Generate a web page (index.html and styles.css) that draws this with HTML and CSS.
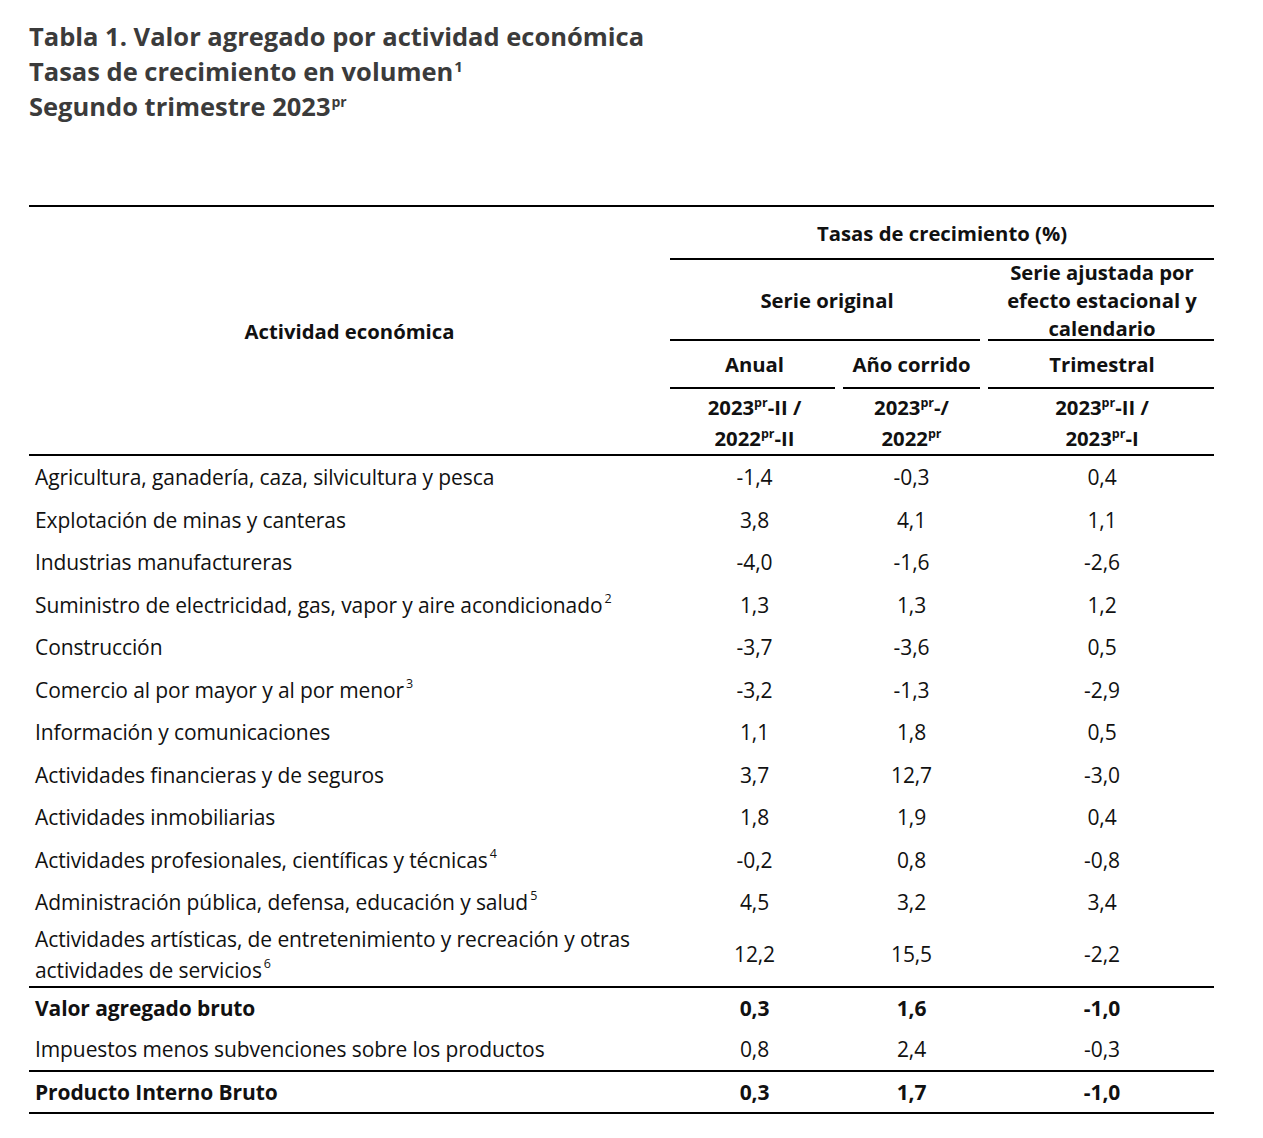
FILE: index.html
```html
<!DOCTYPE html>
<html lang="es">
<head>
<meta charset="utf-8">
<title>Tabla 1. Valor agregado por actividad económica</title>
<link rel="stylesheet" href="styles.css">
</head>
<body>
<div class="page">
  <h1 class="title">
    <span class="tline">Tabla 1. Valor agregado por actividad económica</span>
    <span class="tline">Tasas de crecimiento en volumen<sup class="tsup">1</sup></span>
    <span class="tline">Segundo trimestre 2023<sup class="tsup pr">pr</sup></span>
  </h1>

  <table class="tbl">
    <colgroup>
      <col class="c-act">
      <col class="c-anual">
      <col class="c-anio">
      <col class="c-trim">
    </colgroup>
    <thead>
      <tr class="h1">
        <th rowspan="4" class="h-act">Actividad económica</th>
        <th colspan="3" class="line-full">Tasas de crecimiento (%)</th>
      </tr>
      <tr class="h2">
        <th colspan="2" class="line-r">Serie original</th>
        <th class="line-l last"><span class="tight">Serie ajustada por<br>efecto estacional y<br>calendario</span></th>
      </tr>
      <tr class="h3">
        <th class="line-r">Anual</th>
        <th class="line-lr">Año corrido</th>
        <th class="line-l last">Trimestral</th>
      </tr>
      <tr class="h4">
        <th>2023<sup>pr</sup>-II /<br>2022<sup>pr</sup>-II</th>
        <th>2023<sup>pr</sup>-/<br>2022<sup>pr</sup></th>
        <th class="last">2023<sup>pr</sup>-II /<br>2023<sup>pr</sup>-I</th>
      </tr>
    </thead>
    <tbody>
      <tr><td>Agricultura, ganadería, caza, silvicultura y pesca</td><td>-1,4</td><td>-0,3</td><td>0,4</td></tr>
      <tr><td>Explotación de minas y canteras</td><td>3,8</td><td>4,1</td><td>1,1</td></tr>
      <tr><td>Industrias manufactureras</td><td>-4,0</td><td>-1,6</td><td>-2,6</td></tr>
      <tr><td>Suministro de electricidad, gas, vapor y aire acondicionado<sup class="fn">2</sup></td><td>1,3</td><td>1,3</td><td>1,2</td></tr>
      <tr><td>Construcción</td><td>-3,7</td><td>-3,6</td><td>0,5</td></tr>
      <tr><td>Comercio al por mayor y al por menor<sup class="fn">3</sup></td><td>-3,2</td><td>-1,3</td><td>-2,9</td></tr>
      <tr><td>Información y comunicaciones</td><td>1,1</td><td>1,8</td><td>0,5</td></tr>
      <tr><td>Actividades financieras y de seguros</td><td>3,7</td><td>12,7</td><td>-3,0</td></tr>
      <tr><td>Actividades inmobiliarias</td><td>1,8</td><td>1,9</td><td>0,4</td></tr>
      <tr><td>Actividades profesionales, científicas y técnicas<sup class="fn">4</sup></td><td>-0,2</td><td>0,8</td><td>-0,8</td></tr>
      <tr><td>Administración pública, defensa, educación y salud<sup class="fn">5</sup></td><td>4,5</td><td>3,2</td><td>3,4</td></tr>
      <tr class="two"><td>Actividades artísticas, de entretenimiento y recreación y otras<br>actividades de servicios<sup class="fn">6</sup></td><td>12,2</td><td>15,5</td><td>-2,2</td></tr>
      <tr class="total"><td>Valor agregado bruto</td><td>0,3</td><td>1,6</td><td>-1,0</td></tr>
      <tr><td>Impuestos menos subvenciones sobre los productos</td><td>0,8</td><td>2,4</td><td>-0,3</td></tr>
      <tr class="total"><td>Producto Interno Bruto</td><td>0,3</td><td>1,7</td><td>-1,0</td></tr>
    </tbody>
  </table>
</div>
</body>
</html>
```

FILE: styles.css
```css
html, body {
  margin: 0;
  padding: 0;
  background: #ffffff;
}

.page {
  padding: 19px 0 0 29px;
  font-family: "Open Sans", "Noto Sans", "Liberation Sans", sans-serif;
  color: #111111;
}

.title {
  margin: 0 0 81px 0;
  font-size: 25.5px;
  font-weight: 700;
  line-height: 35px;
  color: #3b3b3b;
}

.tline {
  display: block;
}

.tsup {
  font-size: 15px;
  line-height: 0;
  vertical-align: 9px;
  margin-left: 1px;
}

.tsup.pr {
  font-size: 14px;
}

.tbl {
  width: 1185px;
  table-layout: fixed;
  border-collapse: separate;
  border-spacing: 0;
  border-top: 2px solid #000;
  border-bottom: 2px solid #000;
  font-size: 21px;
  letter-spacing: -0.1px;
}

.c-act { width: 641px; }
.c-anual { width: 169px; }
.c-anio { width: 145px; }
.c-trim { width: 230px; }

.tbl th {
  font-size: 20.3px;
  letter-spacing: 0;
  font-weight: 700;
  text-align: center;
  vertical-align: middle;
  padding: 0;
  line-height: 28px;
  background-repeat: no-repeat;
  background-image: linear-gradient(#000, #000);
  background-size: 0 0;
}

.tbl th.h-act {
  border-bottom: 2px solid #000;
}

.h1 th.line-full { height: 51px; padding-bottom: 2px; }
.h2 th { height: 79px; padding-bottom: 2px; }
.h3 th { height: 46px; padding-bottom: 2px; }
.h4 th {
  height: 62px;
  line-height: 31px;
  border-bottom: 2px solid #000;
  padding-top: 3px;
}

.tbl th.last,
.tbl td:last-child {
  padding-left: 6px;
}

.tight {
  display: block;
  margin: -3px 0;
}

.line-full {
  background-size: 100% 2px !important;
  background-position: left bottom;
}

.line-r {
  background-size: calc(100% - 4px) 2px !important;
  background-position: left bottom;
}

.line-l {
  background-size: calc(100% - 4px) 2px !important;
  background-position: right bottom;
}

.line-lr {
  background-size: calc(100% - 8px) 2px !important;
  background-position: center bottom;
}

.tbl th sup {
  font-size: 12.5px;
  line-height: 0;
  vertical-align: 8px;
}

.tbl td {
  height: 42.5px;
  padding: 0;
  line-height: 32px;
  text-align: center;
  vertical-align: middle;
  font-weight: 400;
}

.tbl td:first-child {
  text-align: left;
  padding-left: 6px;
}

.tbl tr.two td {
  height: 62px;
  line-height: 31px;
}

.tbl tr.total td {
  font-weight: 700;
  border-top: 2px solid #000;
  height: 40px;
}

.fn {
  font-size: 12.5px;
  line-height: 0;
  vertical-align: 10px;
  margin-left: 2px;
}
```
